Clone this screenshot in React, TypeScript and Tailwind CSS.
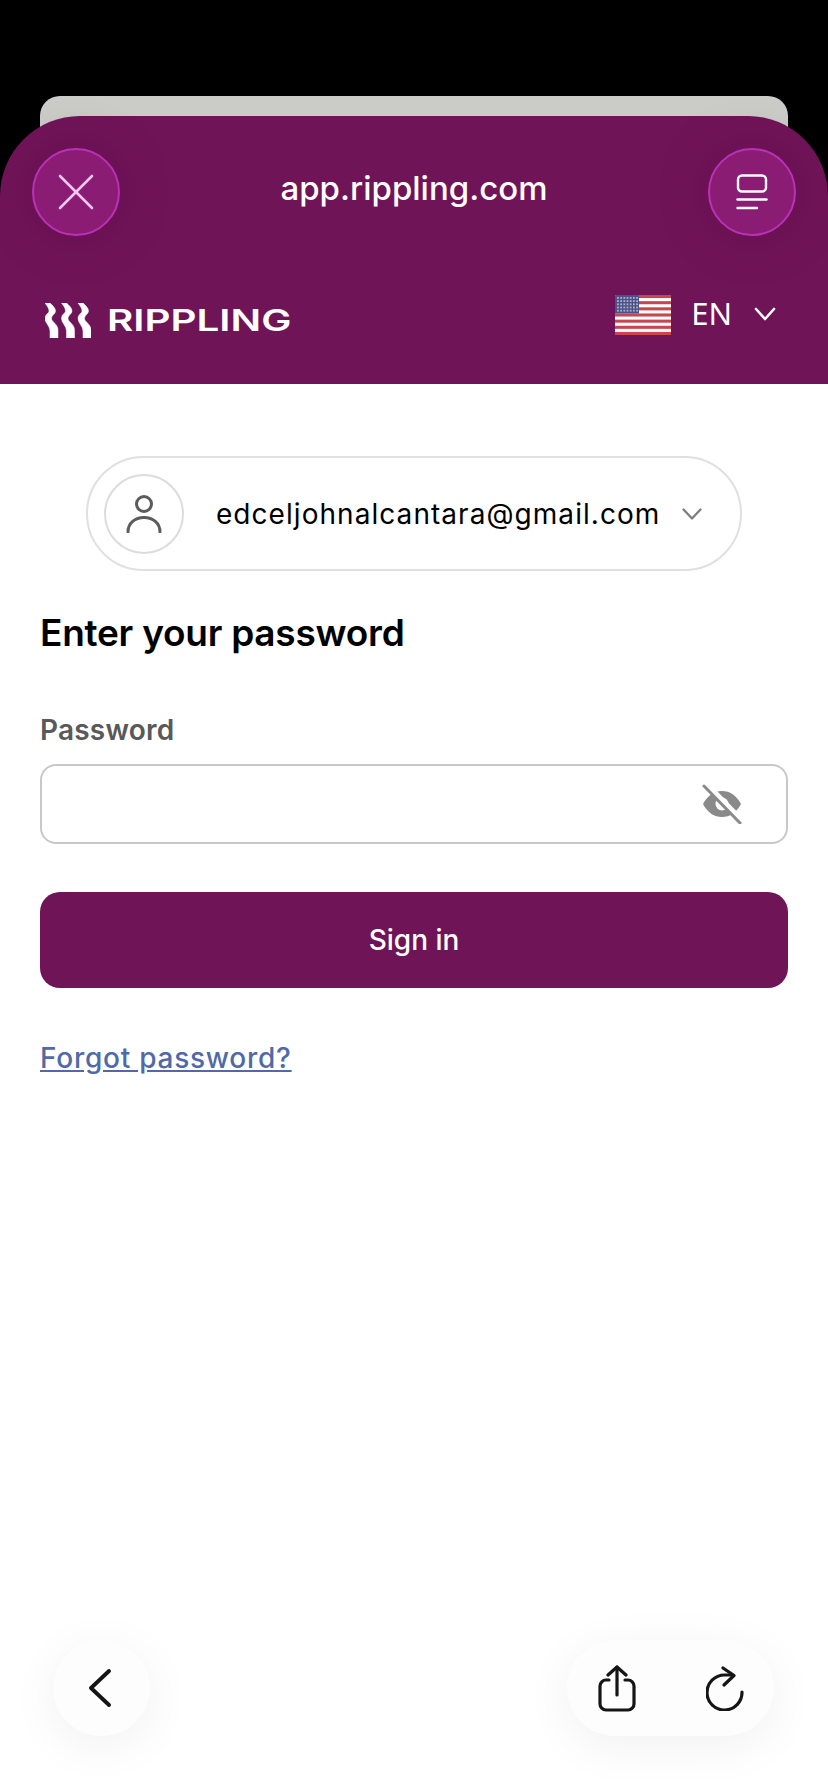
const RibbonPath = "M0 0H5C8 3 10.5 5 10.5 8C10.5 11 6.5 12 6.5 15.5C6.5 19 13 21 13 27V35H5V28C5 23 0 20 0 15.5C0 11 4 10.5 4 8C4 5 2 3 0 0Z";

const RipplingMark = () => (
  <svg width="46" height="35" viewBox="0 0 46 35" fill="#ffffff" stroke="#ffffff" strokeWidth="0.5">
    <path d={RibbonPath} />
    <path d={RibbonPath} transform="translate(16.5 0)" />
    <path d={RibbonPath} transform="translate(33 0)" />
  </svg>
);

const UsFlag = () => {
  const stripes = [0, 2, 4, 6, 8, 10, 12];
  const dots: [number, number][] = [];
  for (let y = 2; y < 17; y += 3.2) {
    for (let x = 2; x < 23; x += 3.2) {
      dots.push([x, y]);
    }
  }
  return (
    <svg width="56" height="40" viewBox="0 0 56 40">
      <rect width="56" height="40" rx="2" fill="#ffffff" />
      {stripes.map((s) => (
        <rect key={s} y={(s * 40) / 13} width="56" height={40 / 13} fill="#c8464f" />
      ))}
      <path d="M2 0H24V18.5H0V2A2 2 0 0 1 2 0Z" fill="#4a5088" />
      {dots.map(([x, y]) => (
        <rect key={`${x}-${y}`} x={x} y={y} width="1.8" height="1.8" fill="#aeb0c8" />
      ))}
    </svg>
  );
};

const EyeOff = () => (
  <svg width="42" height="40" viewBox="0 0 42 40" fill="none">
    <path
      d="M2 20C7 11 13 7 21 7C29 7 35 11 40 20C35 29 29 33 21 33C13 33 7 29 2 20Z"
      fill="#8a8a8a"
    />
    <circle cx="21" cy="20" r="6.5" fill="#ffffff" />
    <path d="M5 0L41 37" stroke="#ffffff" strokeWidth="6" />
    <path d="M3 2L39 39" stroke="#8a8a8a" strokeWidth="3" strokeLinecap="round" />
  </svg>
);

const App = () => {
  return (
    <div className="relative flex h-[1792px] w-[828px] flex-col overflow-hidden bg-white font-['Inter',sans-serif]">
      <div className="bg-black">
        <div className="h-[96px]" />
        <div className="mx-[40px] h-[60px] rounded-t-[20px] bg-[#cbccc8]" />
        <div className="relative -mt-[40px] h-[268px] rounded-t-[80px] bg-[#701458]">
          <div className="flex h-[152px] items-end justify-between px-[32px] pb-[32px]">
            <button
              type="button"
              className="flex h-[88px] w-[88px] items-center justify-center rounded-full border-2 border-[#bb30b8] bg-[#8b1c74] shadow-[0_0_50px_rgba(60,0,50,0.25)]"
            >
              <svg width="36" height="36" viewBox="0 0 36 36" fill="none" stroke="#f6c6f0" strokeWidth="2.6" strokeLinecap="round">
                <path d="M2 2L34 34" />
                <path d="M34 2L2 34" />
              </svg>
            </button>
            <p className="mb-[28px] text-[33px] leading-[40px] font-medium text-white">app.rippling.com</p>
            <button
              type="button"
              className="flex h-[88px] w-[88px] items-center justify-center rounded-full border-2 border-[#bb30b8] bg-[#8b1c74] shadow-[0_0_50px_rgba(60,0,50,0.25)]"
            >
              <svg width="32" height="36" viewBox="0 0 32 36" fill="none" stroke="#ffffff" strokeWidth="2.4" strokeLinecap="round">
                <rect x="2" y="1.5" width="28" height="16" rx="4" />
                <path d="M1.5 25.5H30.5" />
                <path d="M1.5 34H21" />
              </svg>
            </button>
          </div>
          <div className="flex items-center justify-between pr-[52px] pl-[45px] pt-[25px]">
            <div className="mt-[8px] flex items-center gap-[16px]">
              <RipplingMark />
              <span className="inline-block w-[183px] origin-left scale-x-[1.345] text-[30px] leading-[35px] font-semibold text-white">
                RIPPLING
              </span>
            </div>
            <div className="mb-[2px] flex items-center">
              <UsFlag />
              <span className="mb-[4px] ml-[20px] text-[31px] leading-[40px] text-white font-['Noto_Sans',sans-serif]">EN</span>
              <svg className="mb-[3px] ml-[22px]" width="22" height="14" viewBox="0 0 22 14" fill="none" stroke="#ffffff" strokeWidth="2.6" strokeLinecap="round" strokeLinejoin="round">
                <path d="M2 2L11 12L20 2" />
              </svg>
            </div>
          </div>
        </div>
      </div>

      <div className="flex flex-col px-[40px]">
        <div className="mx-auto mt-[72px] flex h-[115px] w-[656px] items-center rounded-full border-2 border-[#e0e0e0] pl-[16px]">
          <div className="flex h-[80px] w-[80px] items-center justify-center rounded-full border-2 border-[#dcdcdc]">
            <svg width="36" height="38" viewBox="0 0 36 38" fill="none" stroke="#5c5c5c" strokeWidth="3" strokeLinecap="round">
              <circle cx="18" cy="9" r="7.5" />
              <path d="M2 37C2 28 9 22.5 18 22.5C27 22.5 34 28 34 37" />
            </svg>
          </div>
          <span className="ml-[32px] text-[28px] leading-[36px] tracking-[1.05px] whitespace-nowrap text-black">edceljohnalcantara@gmail.com</span>
          <svg className="ml-[22px]" width="20" height="12" viewBox="0 0 20 12" fill="none" stroke="#808080" strokeWidth="2.4" strokeLinecap="round" strokeLinejoin="round">
            <path d="M1.5 1.5L10 10.5L18.5 1.5" />
          </svg>
        </div>

        <h1 className="mt-[39px] text-[37px] leading-[46px] font-semibold tracking-[-0.25px] text-black">Enter your password</h1>

        <label className="mt-[56px] text-[28px] leading-[36px] font-semibold tracking-[0.2px] text-[#595959]">Password</label>

        <div className="mt-[16px] flex h-[80px] items-center justify-end rounded-[16px] border-2 border-[#c8c8c8] pr-[43px]">
          <EyeOff />
        </div>

        <button type="button" className="mt-[48px] h-[96px] rounded-[20px] bg-[#701458] text-[28px] font-medium text-white">
          Sign in
        </button>

        <a className="mt-[52px] self-start text-[28px] leading-[36px] font-medium tracking-[0.75px] text-[#5069a8] underline">Forgot password?</a>
      </div>

      <div className="mt-auto flex items-center justify-between pr-[54px] pb-[56px] pl-[53px]">
        <button
          type="button"
          className="flex h-[96px] w-[97px] items-center justify-center rounded-full bg-[#fdfdfd] pr-[3px] shadow-[0_10px_50px_rgba(0,0,0,0.06)]"
        >
          <svg width="24" height="38" viewBox="0 0 24 38" fill="none" stroke="#151515" strokeWidth="3.8" strokeLinecap="round" strokeLinejoin="round">
            <path d="M21 2L3 19L21 36" />
          </svg>
        </button>
        <div className="flex h-[96px] w-[207px] items-center justify-between rounded-full bg-[#fdfdfd] pr-[30px] pl-[31px] shadow-[0_10px_50px_rgba(0,0,0,0.06)]">
          <svg width="38" height="47" viewBox="0 0 38 47" fill="none" stroke="#151515" strokeWidth="3.2" strokeLinecap="round" strokeLinejoin="round">
            <path d="M11 15H8A6 6 0 0 0 2 21V39A6 6 0 0 0 8 45H30A6 6 0 0 0 36 39V21A6 6 0 0 0 30 15H27" />
            <path d="M19 30V2" />
            <path d="M10 10L19 2L28 10" />
          </svg>
          <svg width="38" height="45" viewBox="0 0 38 45" fill="none" stroke="#151515" strokeWidth="3.2" strokeLinecap="round" strokeLinejoin="round">
            <path d="M36 26A17.5 17.5 0 1 1 18.5 9H26" />
            <path d="M17 2L28 9.5L18 19" />
          </svg>
        </div>
      </div>
    </div>
  );
};

export default App;
